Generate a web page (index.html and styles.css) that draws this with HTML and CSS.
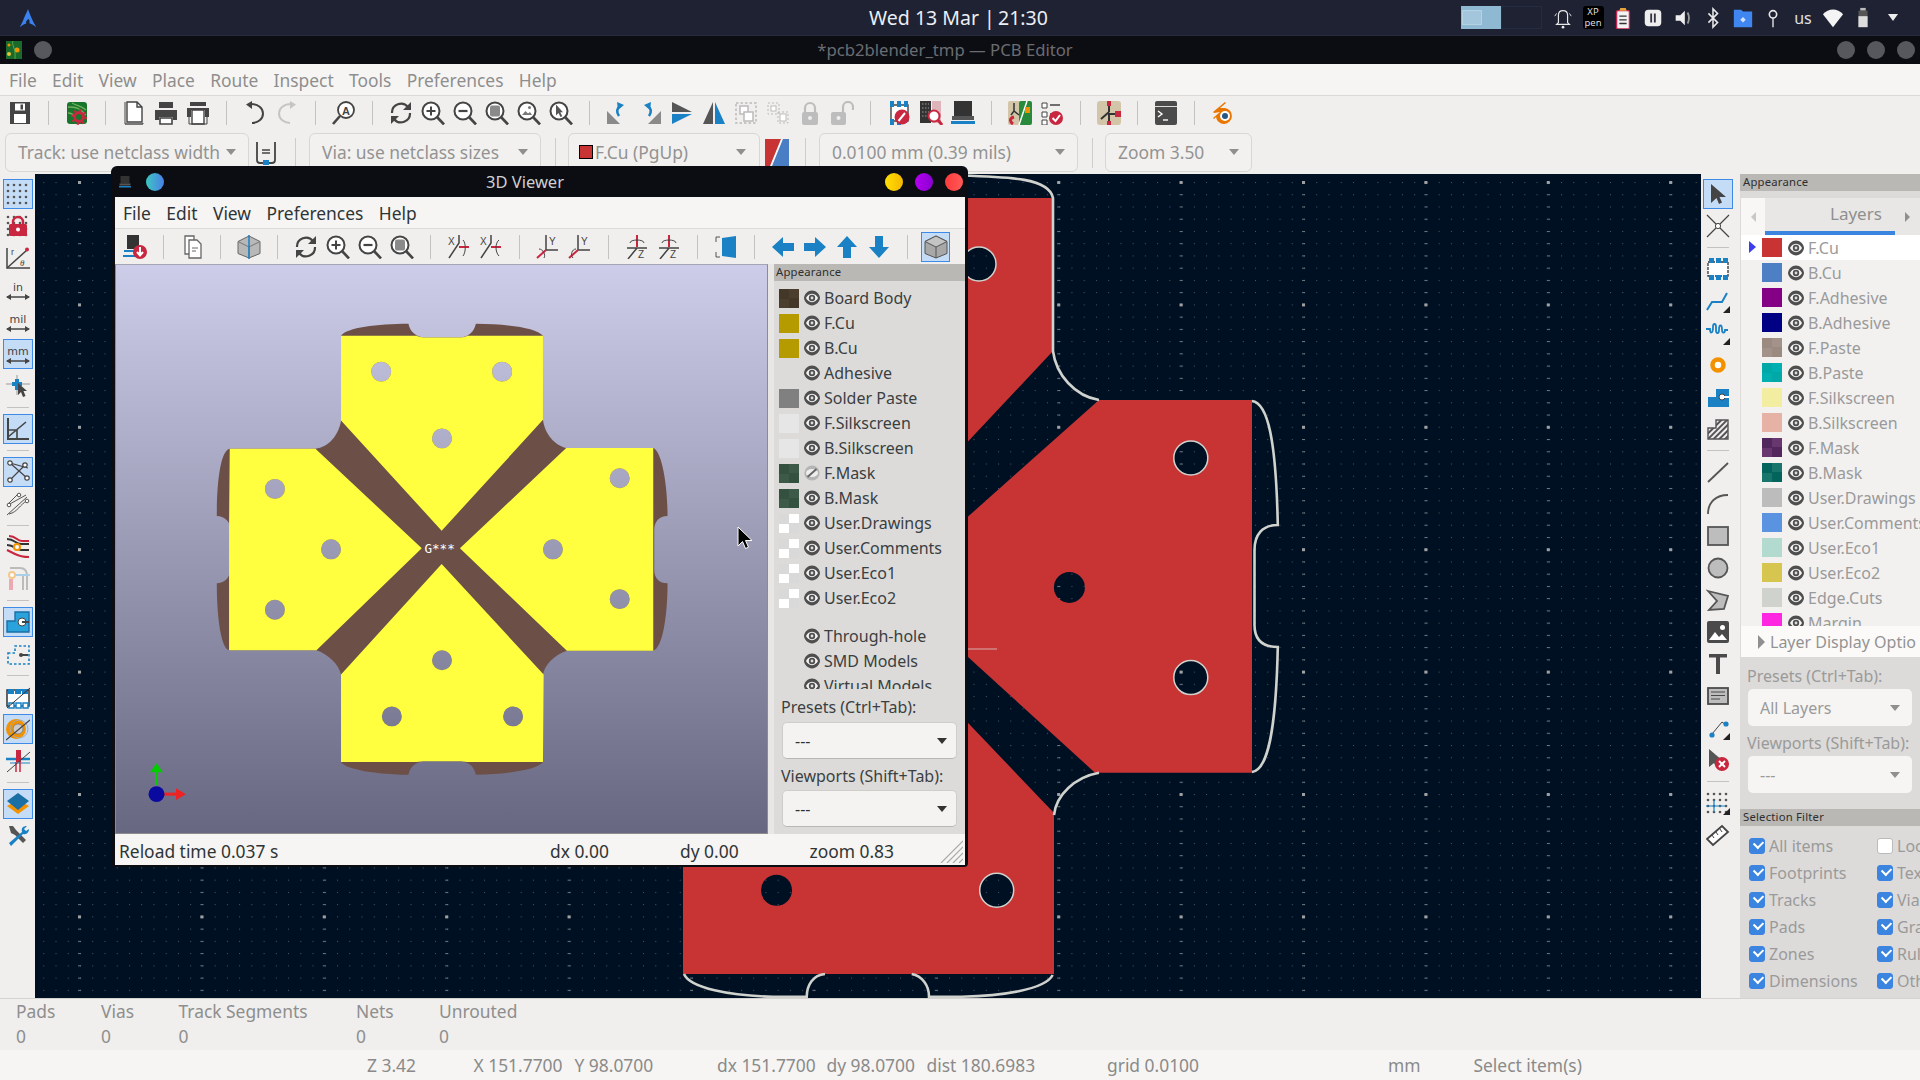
FILE: index.html
```html
<!DOCTYPE html>
<html lang="en">
<head>
<meta charset="utf-8">
<title>PCB Editor</title>
<link rel="stylesheet" href="styles.css">
</head>
<body>
<svg class="defs" aria-hidden="true">
  <symbol id="eye" viewBox="0 0 16 16"><path fill="#4e4e4e" d="M8 .6C12 .6 15.6 4 16 8c-.4 4-4 7.4-8 7.4S.4 12 0 8C.4 4 4 .6 8 .6z"/><path fill="#f4f4f4" d="M8 3.800c3 0 5 2.200 6 4.200-1 2-3 4.200-6 4.200S3 10 2 8c1-2 3-4.200 6-4.200z"/><circle cx="8" cy="8" r="3.200" fill="#4e4e4e"/><circle cx="8" cy="8" r="1.400" fill="#ddd"/></symbol>
  <symbol id="eyeoff" viewBox="0 0 16 16"><circle cx="8" cy="8" r="7.600" fill="#b5b5b5"/><ellipse cx="8" cy="8" rx="6" ry="4" fill="#eee"/><path d="M3.500 12 12.500 4" stroke="#666" stroke-width="2"/></symbol>
  <symbol id="save" viewBox="0 0 24 24"><path fill="#454545" d="M2 1h20v22H2z"/><path fill="#fff" d="M7 2.500h10v7H7zM6 13h12v9H6z"/><path fill="#454545" d="M12.500 3.500H15v5h-2.500z"/></symbol>
  <symbol id="bsetup" viewBox="0 0 24 24"><rect x="2" y="1" width="20" height="22" rx="3" fill="#17752e"/><path d="M3 6c8 0 12 1 18 8M7 2c5 3 10 3 14 7M3 12c3 0 5 1 6 4" fill="none" stroke="#6fb05a" stroke-width="1.400"/><circle cx="14" cy="16" r="4.500" fill="none" stroke="#c8273f" stroke-width="3"/><circle cx="14" cy="16" r="7" fill="none" stroke="#c8273f" stroke-width="2" stroke-dasharray="2.200 3.300"/></symbol>
  <symbol id="page" viewBox="0 0 24 24"><path d="M5 1h10l5 5v15H5zM15 1v5h5" fill="#fff" stroke="#444" stroke-width="1.400"/><path d="M3 23h18" stroke="#444" stroke-width="1.400"/><path d="M3 1v22M21 22v1" stroke="#444" stroke-width="1"/></symbol>
  <symbol id="print" viewBox="0 0 24 24"><path fill="#444" d="M5 1h14v6H5zM1 9h22v10h-4v-3H5v3H1z"/><path d="M6 17h12v6H6z" fill="#fff" stroke="#444" stroke-width="1.600"/></symbol>
  <symbol id="plot" viewBox="0 0 24 24"><path fill="#444" d="M4 1h16v4H4zM1 7h22v9h-4V9H5v7H1z"/><path d="M6 9h12v14H6z" fill="#fff" stroke="#444" stroke-width="1.400"/><path d="M3 23h18M3 9v14M21 9v14" stroke="#444"/></symbol>
  <symbol id="undo" viewBox="0 0 24 24"><path d="M8 3C15 3 20 7 20 12.500S15 22 9 22" fill="none" stroke="#444" stroke-width="2"/><path d="M9 0v8L3 3.500z" fill="#444"/></symbol>
  <symbol id="redo" viewBox="0 0 24 24"><path d="M16 3C9 3 4 7 4 12.500S9 22 15 22" fill="none" stroke="#c5c5c5" stroke-width="2"/><path d="M15 0v8l6-4.500z" fill="#c5c5c5"/></symbol>
  <symbol id="search" viewBox="0 0 24 24"><circle cx="14" cy="9" r="8" fill="#fff" stroke="#444" stroke-width="1.800"/><path d="M8 15 1 23" stroke="#444" stroke-width="2.600"/></symbol>
  <symbol id="refresh" viewBox="0 0 24 24"><path d="M3 12A9 9 0 0 1 19 6M21 12A9 9 0 0 1 5 18" fill="none" stroke="#444" stroke-width="2.200"/><path d="M22 1v8h-8zM2 23v-8h8z" fill="#444"/></symbol>
  <g id="mag"><circle cx="10" cy="10" r="8.500" fill="#fff" stroke="#444" stroke-width="2"/><path d="M16 16l7 7.500" stroke="#444" stroke-width="2.600"/></g>
  <symbol id="zin" viewBox="0 0 24 24"><use href="#mag"/><path d="M5.500 10h9M10 5.500v9" stroke="#444" stroke-width="2"/></symbol>
  <symbol id="zout" viewBox="0 0 24 24"><use href="#mag"/><path d="M5.500 10h9" stroke="#444" stroke-width="2.200"/></symbol>
  <symbol id="zfit" viewBox="0 0 24 24"><use href="#mag"/><rect x="5" y="4.500" width="10" height="11" rx="2" fill="#8a8a8a"/></symbol>
  <symbol id="zobj" viewBox="0 0 24 24"><use href="#mag"/><path d="M5 14l3.500-4 2.500 2.500 2-1.500 2 3z" fill="#777"/><circle cx="12.500" cy="6.500" r="1.500" fill="#777"/></symbol>
  <symbol id="zsel" viewBox="0 0 24 24"><use href="#mag"/><path d="M7 3.500v11l2.500-2.500 2 4 1.800-.8-2-4H14z" fill="#555"/></symbol>
  <symbol id="rccw" viewBox="0 0 24 24"><path d="M1 23V10l13 13z" fill="#8a8a8a"/><path d="M13 15C10 11 11 7 14 5" fill="none" stroke="#1a81c4" stroke-width="2.600"/><path d="M11 1l7 3-6 5z" fill="#1a81c4"/></symbol>
  <symbol id="rcw" viewBox="0 0 24 24"><path d="M23 23V10L10 23z" fill="#8a8a8a"/><path d="M11 15c3-4 2-8-1-10" fill="none" stroke="#1a81c4" stroke-width="2.600"/><path d="M13 1L6 4l6 5z" fill="#1a81c4"/></symbol>
  <symbol id="flipv" viewBox="0 0 24 24"><path d="M2 1l20 10H2z" fill="#555"/><path d="M2 23l20-10H2z" fill="#1a81c4"/></symbol>
  <symbol id="fliph" viewBox="0 0 24 24"><path d="M11 1v22H1z" fill="#555"/><path d="M13 1v22h10z" fill="#1a81c4"/></symbol>
  <symbol id="group" viewBox="0 0 24 24"><rect x="2" y="2" width="20" height="20" fill="none" stroke="#bbb" stroke-width="1.500" stroke-dasharray="2.500 2"/><rect x="6" y="5" width="8" height="8" fill="#fff" stroke="#bbb" stroke-width="1.500"/><rect x="10" y="11" width="9" height="9" fill="#fff" stroke="#bbb" stroke-width="1.500"/></symbol>
  <symbol id="ungroup" viewBox="0 0 24 24"><rect x="2" y="2" width="11" height="11" fill="none" stroke="#bbb" stroke-dasharray="2 2"/><rect x="5" y="5" width="5" height="5" fill="#fff" stroke="#bbb"/><rect x="12" y="11" width="10" height="11" fill="none" stroke="#bbb" stroke-dasharray="2 2"/><rect x="14" y="13" width="6" height="7" fill="#fff" stroke="#bbb"/></symbol>
  <symbol id="lock" viewBox="0 0 24 24"><path d="M7 12V7a5 5 0 0 1 10 0v5" fill="none" stroke="#bdbdbd" stroke-width="2.200"/><rect x="4" y="11" width="16" height="13" rx="2" fill="#bdbdbd"/><circle cx="12" cy="17" r="2" fill="#eee"/></symbol>
  <symbol id="unlock" viewBox="0 0 24 24"><path d="M13 12V6a5 5 0 0 1 10 0v3" fill="none" stroke="#bdbdbd" stroke-width="2.200"/><rect x="1" y="11" width="15" height="13" rx="2" fill="#bdbdbd"/><circle cx="8.500" cy="17" r="2" fill="#eee"/></symbol>
  <symbol id="drc" viewBox="0 0 24 24"><path d="M4 4h17v16H4z" fill="#fff" stroke="#444" stroke-width="1.400"/><path d="M3 0h4v6H3zM10 0h4v6h-4zM17 0h4v6h-4zM3 18h4v6H3zM10 18h4v6h-4z" fill="#1a81c4"/><circle cx="15" cy="16" r="7.500" fill="#c8273f"/><path d="M11.500 20 18 12" stroke="#fff" stroke-width="2"/></symbol>
  <symbol id="netinsp" viewBox="0 0 24 24"><path d="M1 0h11v22H1z" fill="#333"/><path d="M3 3h7M3 7h7M3 11h7M3 15h7" stroke="#999" stroke-dasharray="1.500 1.500"/><path d="M13 0h9v22h-9z" fill="#ddb4b9"/><circle cx="15" cy="15" r="5.500" fill="#fff" stroke="#c8273f" stroke-width="2"/><path d="M19 19l4 5" stroke="#c8273f" stroke-width="3"/></symbol>
  <symbol id="view3d" viewBox="0 0 24 24"><rect x="3" y="0" width="18" height="15" fill="#333"/><rect x="1" y="15" width="22" height="4" fill="#555"/><rect x="0" y="20" width="24" height="3" fill="#1a81c4"/></symbol>
  <symbol id="sync" viewBox="0 0 24 24"><rect x="0" y="0" width="13" height="24" rx="2" fill="#d3c6a8"/><rect x="11" y="0" width="13" height="24" rx="2" fill="#2a8a3c"/><path d="M6 2v8l-3 4M6 10l5 4" stroke="#333" stroke-width="1.500" fill="none"/><path d="M11 24 19 0" stroke="#fff" stroke-width="1.500"/><rect x="17" y="6" width="5" height="6" fill="#f39200"/><path d="M5 23c-4-3-3-6 1-7" fill="none" stroke="#c8273f" stroke-width="3"/></symbol>
  <symbol id="check" viewBox="0 0 24 24"><path d="M2 2h5v5H2zM2 11h5v5H2zM2 19h5v5H2z" fill="#fff" stroke="#444"/><path d="M10 4h10M10 13h3" stroke="#444" stroke-width="1.400"/><circle cx="16" cy="17" r="7" fill="#c8273f"/><path d="M12.500 17l3 3 4.500-6" fill="none" stroke="#fff" stroke-width="2"/></symbol>
  <symbol id="sch" viewBox="0 0 24 24"><rect width="24" height="24" rx="3" fill="#d3c6a8"/><path d="M12 3v8M20 13H12v6M12 11 4 18M12 19v3" stroke="#333" stroke-width="2" fill="none"/><path d="M10 0h4v5h-4zM18 10h6v6h-6zM10 20h4v4h-4z" fill="#c8273f"/></symbol>
  <symbol id="term" viewBox="0 0 24 24"><rect x="1" y="0" width="22" height="24" rx="2" fill="#4b4b4b"/><path d="M1 5.500h22" stroke="#ddd"/><path d="M4 10l4 3-4 3" fill="none" stroke="#fff" stroke-width="1.400"/><path d="M9 19h5" stroke="#fff" stroke-width="1.400"/></symbol>
  <symbol id="blender" viewBox="0 0 24 24"><path d="M5 16A8 8 0 1 0 14 7L9 7l6-5-1-1L2 11l1 1 6-1-7 6 1 1z" fill="#ea7600"/><circle cx="14" cy="15" r="5" fill="#fff"/><circle cx="14" cy="15" r="3" fill="#265787"/></symbol>

  <symbol id="grid" viewBox="0 0 24 24"><g fill="#555"><circle cx="2" cy="3" r="1.300"/><circle cx="8" cy="3" r="1.300"/><circle cx="14" cy="3" r="1.300"/><circle cx="20" cy="3" r="1.300"/><circle cx="2" cy="9" r="1.300"/><circle cx="8" cy="9" r="1.300"/><circle cx="14" cy="9" r="1.300"/><circle cx="20" cy="9" r="1.300"/><circle cx="2" cy="15" r="1.300"/><circle cx="8" cy="15" r="1.300"/><circle cx="14" cy="15" r="1.300"/><circle cx="20" cy="15" r="1.300"/><circle cx="2" cy="21" r="1.300"/><circle cx="8" cy="21" r="1.300"/><circle cx="14" cy="21" r="1.300"/><circle cx="20" cy="21" r="1.300"/></g></symbol>
  <symbol id="gridlock" viewBox="0 0 24 24"><use href="#grid"/><path d="M7 11V8a5 5 0 0 1 10 0v3" fill="none" stroke="#c8273f" stroke-width="2.400"/><rect x="3" y="10" width="18" height="12" rx="1.500" fill="#c8273f"/><circle cx="12" cy="15.500" r="2" fill="#fff"/></symbol>
  <symbol id="polar" viewBox="0 0 24 24"><path d="M1 2v20h23" fill="none" stroke="#444" stroke-width="1.500"/><path d="M1 22 21 4" stroke="#444" stroke-width="1.500"/><circle cx="21" cy="3.500" r="2" fill="#c8273f"/></symbol>
  <symbol id="dimarrow" viewBox="0 0 24 24"><path d="M1 19h22" stroke="#444" stroke-width="1.500"/><path d="M0 19l5-3v6zM24 19l-5-3v6z" fill="#444"/></symbol>
  <symbol id="ccursor" viewBox="0 0 24 24"><path d="M0 10h24M11 1v20" stroke="#999"/><path d="M6 8h10v4H6zM9 5h4v11H9z" fill="#1a81c4"/><path d="M12 9v12l3-3 2 5 2.500-1-2-5H21z" fill="#444"/></symbol>
  <symbol id="axes" viewBox="0 0 24 24"><path d="M2 1v21h21" fill="none" stroke="#444" stroke-width="2"/><path d="M2 20 20 5M2 13h9v9" fill="none" stroke="#444" stroke-width="1.600"/></symbol>
  <symbol id="rats" viewBox="0 0 24 24"><path d="M4 3 21 18M4 20 19 5M4 3l18 5" stroke="#444" stroke-width="1.200"/><g fill="#fff" stroke="#444" stroke-width="1.200"><circle cx="4" cy="3" r="2.200"/><circle cx="19" cy="5" r="2.200"/><circle cx="4" cy="20" r="2.200"/><circle cx="21" cy="18" r="2.200"/></g></symbol>
  <symbol id="curved" viewBox="0 0 24 24"><path d="M2 12 11 3M3 22C12 20 14 12 21 9M2 13l18-10M1 23 21 5" fill="none" stroke="#555" stroke-width="1"/><g fill="#fff" stroke="#555"><circle cx="3" cy="13" r="1.800"/><circle cx="13" cy="3" r="1.800"/><circle cx="21" cy="9" r="1.800"/></g></symbol>
  <symbol id="hc" viewBox="0 0 24 24"><path d="M1 4c8 0 8 5 14 5h8M1 10c8 0 8 5 14 5h8" fill="none" stroke="#333" stroke-width="2"/><path d="M3 1c8 0 7 5 13 5h7" fill="none" stroke="#c8273f" stroke-width="2"/><path d="M1 15l8 4c4 2 7 3 14 3" fill="none" stroke="#c8273f" stroke-width="2"/><circle cx="11" cy="12" r="3" fill="#fff" stroke="#f39200" stroke-width="2"/></symbol>
  <symbol id="hc2" viewBox="0 0 24 24"><path d="M17 23V8M21 23V8M4 1h10c6 0 7 5 7 8" fill="none" stroke="#bbb" stroke-width="2"/><path d="M4 8h20" stroke="#a9cfe9" stroke-width="2"/><path d="M3 12h4v11H3z" fill="#eba9b2"/><circle cx="6" cy="8" r="3" fill="#fff" stroke="#f5c78a" stroke-width="2"/></symbol>
  <symbol id="fillz" viewBox="0 0 24 24"><path d="M1 11h8V2h14v20H1z" fill="#2aa3dd" stroke="#1a6fa5" stroke-width="1.400"/><circle cx="16" cy="12" r="4" fill="#fff" stroke="#444"/><path d="M16 12h7" stroke="#444" stroke-width="2"/></symbol>
  <symbol id="outl" viewBox="0 0 24 24"><path d="M2 11h7V4h14v18H2z" fill="none" stroke="#1a81c4" stroke-width="1.600" stroke-dasharray="2.500 2"/><path d="M14 13h8" stroke="#444" stroke-width="2"/><circle cx="15" cy="13" r="2" fill="#444"/></symbol>
  <symbol id="fp" viewBox="0 0 24 24"><path d="M1 5h22v16H1z" fill="#fff" stroke="#333" stroke-width="1.500"/><path d="M2 4h6v5H2zM9 4h6v5H9zM16 4h6v5h-6z" fill="#1a81c4"/><path d="M3 18h5v5H3zM10 18h5v5h-5zM17 18h5v5h-5z" fill="#fff" stroke="#1a81c4" stroke-width="1.500"/><path d="M1 23 24 3" stroke="#333"/></symbol>
  <symbol id="padz" viewBox="0 0 24 24"><circle cx="10" cy="12" r="10" fill="#f39200"/><circle cx="12" cy="12" r="5" fill="#ccc" stroke="#888"/><circle cx="13" cy="12" r="9" fill="none" stroke="#aaa"/><path d="M0 23 24 3" stroke="#444" stroke-width="1.200"/></symbol>
  <symbol id="viaz" viewBox="0 0 24 24"><path d="M0 10h24" stroke="#1a81c4" stroke-width="2.500"/><path d="M4 14h20" stroke="#1a81c4"/><path d="M10 1h5v12h-5z" fill="#c8273f"/><path d="M10 13v10M14 13v10" stroke="#c8273f" stroke-width="1.500"/><path d="M1 23 24 3" stroke="#444"/></symbol>
  <symbol id="layers" viewBox="0 0 24 24"><path d="M1 14 12 8l11 6-11 8z" fill="#f39200"/><path d="M1 9 12 1l11 8-11 9z" fill="#1a6fa5"/></symbol>
  <symbol id="tools" viewBox="0 0 24 24"><path d="M3 2l4 0 3 4 3 3 7 7-3 3-8-8-4-2z" fill="#555"/><path d="M21 2c-4 0-6 2-5 6L3 19l2 3L17 10c4 1 6-2 6-5l-3 2-2-2z" fill="#1a81c4"/></symbol>

  <symbol id="sel" viewBox="0 0 24 24"><path d="M5 2v19l5.500-5 2.500 6 3-1.500-2.500-5.500H20z" fill="#444"/></symbol>
  <symbol id="xcross" viewBox="0 0 24 24"><path d="M1 1l22 22M23 1 1 23" stroke="#444" stroke-width="1.200"/><circle cx="12" cy="12" r="2.600" fill="#fff" stroke="#444"/></symbol>
  <symbol id="fpadd" viewBox="0 0 24 24"><path d="M2 5h20v14H2z" fill="#fff" stroke="#333" stroke-width="1.300" stroke-dasharray="3 1"/><path d="M3 1h5v5H3zM10 1h5v5h-5zM17 1h5v5h-5zM3 18h5v5H3zM10 18h5v5h-5zM17 18h5v5h-5z" fill="#1a81c4"/></symbol>
  <g id="corner"><path d="M24 17v7h-7z" fill="#222"/></g>
  <symbol id="route" viewBox="0 0 24 24"><path d="M1 21l5-8h10l5-9" fill="none" stroke="#1a81c4" stroke-width="2"/><use href="#corner"/></symbol>
  <symbol id="diff" viewBox="0 0 24 24"><path d="M0 8h4c0 5 3 5 3-2 0-4 3-4 3 0v3c0 4 3 4 3 0 0-6 3-6 3 0 0 4 3 3 3 0h3" fill="none" stroke="#1a81c4" stroke-width="1.800"/><use href="#corner"/></symbol>
  <symbol id="viaadd" viewBox="0 0 24 24"><circle cx="12" cy="12" r="5.500" fill="#fff" stroke="#f39200" stroke-width="4.500"/></symbol>
  <symbol id="fp2" viewBox="0 0 24 24"><path d="M2 12h8V4h13v18H2z" fill="#1a81c4"/><circle cx="16" cy="12" r="3" fill="#fff" stroke="#444"/><path d="M16 12h7" stroke="#fff" stroke-width="2"/></symbol>
  <symbol id="zone" viewBox="0 0 24 24"><defs><pattern id="hatch" width="4" height="4" patternUnits="userSpaceOnUse" patternTransform="rotate(45)"><rect width="2" height="4" fill="#555"/></pattern></defs><path d="M2 11h8V3h12v19H2z" fill="url(#hatch)" stroke="#555" stroke-width="1.400"/></symbol>
  <symbol id="line" viewBox="0 0 24 24"><path d="M2 22 22 3" stroke="#555" stroke-width="1.800"/></symbol>
  <symbol id="arc" viewBox="0 0 24 24"><path d="M2 22C2 10 10 3 22 3" fill="none" stroke="#555" stroke-width="1.800"/></symbol>
  <symbol id="rect" viewBox="0 0 24 24"><rect x="2" y="3" width="20" height="18" fill="#bdbdbd" stroke="#555" stroke-width="1.800"/></symbol>
  <symbol id="circ" viewBox="0 0 24 24"><circle cx="12" cy="12" r="9.500" fill="#bdbdbd" stroke="#555" stroke-width="1.800"/></symbol>
  <symbol id="poly" viewBox="0 0 24 24"><path d="M2 3l20 5-4 13-15 1 8-9z" fill="#bdbdbd" stroke="#555" stroke-width="1.800"/></symbol>
  <symbol id="image" viewBox="0 0 24 24"><rect x="1" y="1" width="22" height="22" rx="2" fill="#4a4a4a"/><path d="M3 20l6-8 4 5 3-3 5 6z" fill="#fff"/><circle cx="16.500" cy="7.500" r="2.500" fill="#fff"/></symbol>
  <symbol id="ttool" viewBox="0 0 24 24"><path d="M3 2h18v3.500h-7V22h-4V5.500H3z" fill="#4a4a4a"/></symbol>
  <symbol id="tbox" viewBox="0 0 24 24"><rect x="2" y="4" width="20" height="16" fill="#bdbdbd" stroke="#4a4a4a" stroke-width="1.800"/><path d="M5 8h14M5 11.500h14M5 15h9" stroke="#4a4a4a" stroke-width="1.200"/></symbol>
  <symbol id="dim" viewBox="0 0 24 24"><path d="M6 18 16 6l4 3" fill="none" stroke="#444"/><circle cx="6" cy="19" r="2.600" fill="#1a81c4"/><circle cx="20" cy="8" r="2.600" fill="#1a81c4"/><use href="#corner"/></symbol>
  <symbol id="del" viewBox="0 0 24 24"><path d="M3 1v18l5-4 2 4 4-3-2-3h5z" fill="#555"/><circle cx="16" cy="16" r="7" fill="#c8273f"/><path d="M13 13l6 6M19 13l-6 6" stroke="#fff" stroke-width="2"/></symbol>
  <symbol id="gorigin" viewBox="0 0 24 24"><use href="#grid"/><path d="M0 15h20M8 9v12" stroke="#1a81c4" stroke-width="1.200"/><use href="#corner"/></symbol>
  <symbol id="ruler" viewBox="0 0 24 24"><path d="M1 16 16 3l6 6L7 22z" fill="#fff" stroke="#444" stroke-width="1.800"/><path d="M6 12l2 3M10 9l2 3M14 6l2 3" stroke="#444"/></symbol>

  <symbol id="dsave" viewBox="0 0 24 24"><rect x="4" y="0" width="12" height="14" fill="#333"/><path d="M1 16h12M0 21h14" stroke="#1a81c4" stroke-width="2"/><circle cx="17" cy="17" r="7" fill="#c8273f"/><path d="M17 12v8M14 17l3 3.500 3-3.500" fill="none" stroke="#fff" stroke-width="2"/></symbol>
  <symbol id="copy" viewBox="0 0 24 24"><path d="M5 1h9l0 18H5z" fill="#fff" stroke="#666" stroke-width="1.300"/><path d="M9 5h8l4 4v14H9z" fill="#fff" stroke="#666" stroke-width="1.300"/><path d="M12 13h6M12 16h4" stroke="#666"/></symbol>
  <symbol id="cube" viewBox="0 0 24 24"><path d="M12 1 23 6.500v12L12 23 1 18.500v-12z" fill="#b8b8b8" stroke="#666"/><path d="M1 6.500 12 12l11-5.500M12 12v11" stroke="#777" fill="none"/><path d="M12 0v24" stroke="#1a81c4" stroke-width="1.500"/></symbol>
  <symbol id="cubeg" viewBox="0 0 24 24"><path d="M12 1 23 6.500v12L12 23 1 18.500v-12z" fill="#a8a8a8" stroke="#555"/><path d="M1 6.500 12 12l11-5.500L12 1z" fill="#c4c4c4" stroke="#555"/><path d="M12 12v11" stroke="#555"/></symbol>
  <symbol id="rx1" viewBox="0 0 24 24"><path d="M2 23 12 8V0" fill="none" stroke="#444" stroke-width="1.500"/><path d="M12 12h10" stroke="#c8273f" stroke-width="2"/><path d="M16 5c3 3 3 12 0 16" fill="none" stroke="#444"/></symbol>
  <symbol id="rx2" viewBox="0 0 24 24"><path d="M2 23 12 8V0" fill="none" stroke="#444" stroke-width="1.500"/><path d="M12 12h10" stroke="#c8273f" stroke-width="2"/><path d="M20 5c-4 3-4 12 0 16" fill="none" stroke="#444"/></symbol>
  <symbol id="ry1" viewBox="0 0 24 24"><path d="M10 0v15h12" fill="none" stroke="#444" stroke-width="1.500"/><path d="M1 23 10 15" stroke="#c8273f" stroke-width="2"/><path d="M3 14c4 0 7 6 5 9" fill="none" stroke="#444"/></symbol>
  <symbol id="ry2" viewBox="0 0 24 24"><path d="M10 0v15h12" fill="none" stroke="#444" stroke-width="1.500"/><path d="M1 23 10 15" stroke="#c8273f" stroke-width="2"/><path d="M8 14c-4 0-6 6-3 9" fill="none" stroke="#444"/></symbol>
  <symbol id="rz1" viewBox="0 0 24 24"><path d="M12 0v12" stroke="#c8273f" stroke-width="2"/><path d="M2 13h20M12 13 3 24" stroke="#444" stroke-width="1.500"/><path d="M5 8c0-4 14-4 14 0" fill="none" stroke="#444"/></symbol>
  <symbol id="flip3" viewBox="0 0 24 24"><path d="M2 2h4M2 22h4M2 2v5M2 17v5" stroke="#555" fill="none"/><path d="M8 3l14-2v22L8 21z" fill="#1a81c4"/></symbol>
  <symbol id="aleft" viewBox="0 0 24 24"><path d="M1 12 12 2v6h11v8H12v6z" fill="#1a81c4"/></symbol>
  <symbol id="aright" viewBox="0 0 24 24"><path d="M23 12 12 2v6H1v8h11v6z" fill="#1a81c4"/></symbol>
  <symbol id="aup" viewBox="0 0 24 24"><path d="M12 1 22 12h-6v11H8V12H2z" fill="#1a81c4"/></symbol>
  <symbol id="adown" viewBox="0 0 24 24"><path d="M12 23 22 12h-6V1H8v11H2z" fill="#1a81c4"/></symbol>

  <symbol id="bell" viewBox="0 0 24 24"><path d="M7 17V9c0-3 2-5 5-5s5 2 5 5v8l2 2H5z" fill="none" stroke="#e8e8e8" stroke-width="1.300"/><circle cx="12" cy="22" r="1.500" fill="#e8e8e8"/><path d="M5 7 3 10M19 7l2 3" stroke="#e8e8e8"/></symbol>
  <symbol id="bookmark" viewBox="0 0 24 24"><rect x="5" y="4" width="14" height="20" rx="1.500" fill="#f3f3f3" stroke="#c22550" stroke-width="1.500"/><path d="M9 1h6l1 3H8z" fill="#e8a23a"/><path d="M8 10h8M8 14h8M8 18h8" stroke="#333" stroke-width="1.500"/></symbol>
  <symbol id="pausei" viewBox="0 0 24 24"><rect x="3" y="3" width="18" height="18" rx="4" fill="#eee"/><path d="M9 7h2v10H9zM13 7h2v10h-2z" fill="#334"/></symbol>
  <symbol id="vol" viewBox="0 0 24 24"><path d="M4 9h5l5-5v16l-5-5H4z" fill="#eee"/><path d="M17 6c2 4 2 8 0 12" fill="none" stroke="#999" stroke-width="2"/></symbol>
  <symbol id="bt" viewBox="0 0 24 24"><path d="M7 7l10 10-5 5V2l5 5L7 17" fill="none" stroke="#e8e8e8" stroke-width="1.700"/></symbol>
  <symbol id="folder" viewBox="0 0 24 24"><path d="M2 3h8l2 2h10v17H2z" fill="#3f86f0"/><path d="M12 11l3 3-3 3-3-3z" fill="#cfe2ff"/></symbol>
  <symbol id="pin" viewBox="0 0 24 24"><circle cx="12" cy="8" r="4" fill="none" stroke="#e8e8e8" stroke-width="1.800"/><path d="M12 12v10" stroke="#e8e8e8" stroke-width="1.500"/></symbol>
  <symbol id="wifi" viewBox="0 0 24 24"><path d="M1 8C7 1 17 1 23 8L12 22z" fill="#f4f4f4"/></symbol>
  <symbol id="batt" viewBox="0 0 24 24"><rect x="9" y="1" width="6" height="3" fill="#bbb"/><rect x="7" y="4" width="10" height="18" fill="#555"/><rect x="7" y="10" width="10" height="12" fill="#ddd"/></symbol>
  <symbol id="arch" viewBox="0 0 24 24"><path d="M12 0c-1 3-2 5-4 9-2 5-4 10-7 15 3-2 6-4 9-5-1-1-1-1 0-3 2-3 4-3 4 0 0 2 0 2 0 3 3 1 6 3 9 5C19 18 14 6 12 0z" fill="#3b82f0"/></symbol>
  <symbol id="kicad" viewBox="0 0 16 18"><rect width="16" height="18" fill="#1a6a2c"/><circle cx="11" cy="9" r="2.500" fill="#f39200"/><circle cx="3" cy="4" r="1.500" fill="#f39200"/><circle cx="3" cy="13" r="2" fill="#e8c53a"/><path d="M7 0c-2 4 3 6 2 18" stroke="#5aa94a" fill="none"/></symbol>
</svg>

<header class="topbar">
  <div class="top-left"><svg class="archlogo"><use href="#arch"/></svg></div>
  <div class="clock">Wed 13 Mar |&#8201;21:30</div>
  <div class="tray-row">
    <div class="pager"><span class="pager-on"><span class="pager-win"></span></span><span class="pager-off"></span></div>
    <span class="tray"><svg class="tray-ic"><use href="#bell"/></svg></span>
    <span class="tray"><span class="xp">XP<br>pen</span></span>
    <span class="tray"><svg class="tray-ic"><use href="#bookmark"/></svg></span>
    <span class="tray"><svg class="tray-ic"><use href="#pausei"/></svg></span>
    <span class="tray"><svg class="tray-ic"><use href="#vol"/></svg></span>
    <span class="tray"><svg class="tray-ic"><use href="#bt"/></svg></span>
    <span class="tray"><svg class="tray-ic"><use href="#folder"/></svg></span>
    <span class="tray"><svg class="tray-ic"><use href="#pin"/></svg></span>
    <span class="tray tray-text">us</span>
    <span class="tray"><svg class="tray-ic"><use href="#wifi"/></svg></span>
    <span class="tray"><svg class="tray-ic"><use href="#batt"/></svg></span>
    <span class="tray"><span class="tray-caret"></span></span>
  </div>
</header>

<div class="titlebar">
  <div class="tb-left"><svg class="kicad"><use href="#kicad"/></svg><span class="dot dot-gray dot-first"></span></div>
  <div class="title">*pcb2blender_tmp — PCB Editor</div>
  <div class="tb-right"><span class="dot dot-gray"></span><span class="dot dot-gray"></span><span class="dot dot-gray"></span></div>
</div>

<nav class="menubar">
  <span>File</span><span>Edit</span><span>View</span><span>Place</span><span>Route</span><span>Inspect</span><span>Tools</span><span>Preferences</span><span>Help</span>
</nav>

<div class="maintb">
  <span class="tool"><svg class="ic"><use href="#save"/></svg></span><i class="sep"></i>
  <span class="tool"><svg class="ic"><use href="#bsetup"/></svg></span><i class="sep"></i>
  <span class="tool"><svg class="ic"><use href="#page"/></svg></span>
  <span class="tool"><svg class="ic"><use href="#print"/></svg></span>
  <span class="tool"><svg class="ic"><use href="#plot"/></svg></span><i class="sep"></i>
  <span class="tool"><svg class="ic"><use href="#undo"/></svg></span>
  <span class="tool"><svg class="ic"><use href="#redo"/></svg></span><i class="sep"></i>
  <span class="tool"><svg class="ic" viewBox="0 0 24 24"><use href="#search"/><text class="it it-a" x="14" y="13.500">A</text></svg></span><i class="sep"></i>
  <span class="tool"><svg class="ic"><use href="#refresh"/></svg></span>
  <span class="tool"><svg class="ic"><use href="#zin"/></svg></span>
  <span class="tool"><svg class="ic"><use href="#zout"/></svg></span>
  <span class="tool"><svg class="ic"><use href="#zfit"/></svg></span>
  <span class="tool"><svg class="ic"><use href="#zobj"/></svg></span>
  <span class="tool"><svg class="ic"><use href="#zsel"/></svg></span><i class="sep"></i>
  <span class="tool"><svg class="ic"><use href="#rccw"/></svg></span>
  <span class="tool"><svg class="ic"><use href="#rcw"/></svg></span>
  <span class="tool"><svg class="ic"><use href="#flipv"/></svg></span>
  <span class="tool"><svg class="ic"><use href="#fliph"/></svg></span>
  <span class="tool"><svg class="ic"><use href="#group"/></svg></span>
  <span class="tool"><svg class="ic"><use href="#ungroup"/></svg></span>
  <span class="tool"><svg class="ic"><use href="#lock"/></svg></span>
  <span class="tool"><svg class="ic"><use href="#unlock"/></svg></span><i class="sep"></i>
  <span class="tool"><svg class="ic"><use href="#drc"/></svg></span>
  <span class="tool"><svg class="ic"><use href="#netinsp"/></svg></span>
  <span class="tool"><svg class="ic"><use href="#view3d"/></svg></span><i class="sep"></i>
  <span class="tool"><svg class="ic"><use href="#sync"/></svg></span>
  <span class="tool"><svg class="ic"><use href="#check"/></svg></span><i class="sep"></i>
  <span class="tool"><svg class="ic"><use href="#sch"/></svg></span><i class="sep"></i>
  <span class="tool"><svg class="ic"><use href="#term"/></svg></span><i class="sep"></i>
  <span class="tool"><svg class="ic"><use href="#blender"/></svg></span>
</div>

<div class="subtb">
  <div class="combo combo-track"><span>Track: use netclass width</span><i class="caret"></i></div>
  <svg class="lock-ic" viewBox="0 0 24 24"><path d="M3 1v18a3 3 0 0 0 3 3h12a3 3 0 0 0 3-3V1" fill="none" stroke="#444" stroke-width="1.800"/><path d="M8 9h8M8 12h8" stroke="#444" stroke-width="1.400"/><path d="M9 19h6v5H9z" fill="#1a81c4"/></svg>
  <i class="subsep"></i>
  <div class="combo combo-via"><span>Via: use netclass sizes</span><i class="caret"></i></div>
  <i class="subsep"></i>
  <div class="combo combo-layer"><span class="layer-value"><i class="layer-chip"></i>F.Cu (PgUp)</span><i class="caret"></i></div>
  <svg class="pair-ic" viewBox="0 0 24 27"><path d="M0 0h16L5 27H0z" fill="#c83434"/><path d="M24 0v27H7L18 0z" fill="#4a7ec4"/><path d="M17 0 6 27" stroke="#fff" stroke-width="1"/></svg>
  <i class="subsep"></i>
  <div class="combo combo-grid"><span>0.0100 mm (0.39 mils)</span><i class="caret"></i></div>
  <i class="subsep"></i>
  <div class="combo combo-zoom"><span>Zoom 3.50</span><i class="caret"></i></div>
</div>

<main class="workspace">
  <aside class="vbar vbar-left">
    <span class="vtool on"><svg class="ic"><use href="#grid"/></svg></span>
    <span class="vtool"><svg class="ic"><use href="#gridlock"/></svg></span>
    <span class="vtool"><svg class="ic" viewBox="0 0 24 24"><use href="#polar"/><text class="it it-r" x="5" y="9">r</text><text class="it it-th" x="14" y="20">θ</text></svg></span>
    <span class="vtool"><svg class="ic" viewBox="0 0 24 24"><use href="#dimarrow"/><text class="it it-u" x="12" y="13">in</text></svg></span>
    <span class="vtool"><svg class="ic" viewBox="0 0 24 24"><use href="#dimarrow"/><text class="it it-u" x="12" y="13">mil</text></svg></span>
    <span class="vtool on"><svg class="ic" viewBox="0 0 24 24"><use href="#dimarrow"/><text class="it it-u" x="12" y="13">mm</text></svg></span>
    <span class="vtool"><svg class="ic"><use href="#ccursor"/></svg></span>
    <i class="vsep"></i>
    <span class="vtool on"><svg class="ic"><use href="#axes"/></svg></span>
    <i class="vsep"></i>
    <span class="vtool on"><svg class="ic"><use href="#rats"/></svg></span>
    <span class="vtool"><svg class="ic"><use href="#curved"/></svg></span>
    <i class="vsep"></i>
    <span class="vtool"><svg class="ic"><use href="#hc"/></svg></span>
    <span class="vtool"><svg class="ic"><use href="#hc2"/></svg></span>
    <i class="vsep"></i>
    <span class="vtool on"><svg class="ic"><use href="#fillz"/></svg></span>
    <span class="vtool"><svg class="ic"><use href="#outl"/></svg></span>
    <i class="vsep"></i>
    <span class="vtool"><svg class="ic"><use href="#fp"/></svg></span>
    <span class="vtool on"><svg class="ic"><use href="#padz"/></svg></span>
    <span class="vtool"><svg class="ic"><use href="#viaz"/></svg></span>
    <i class="vsep"></i>
    <span class="vtool on"><svg class="ic"><use href="#layers"/></svg></span>
    <span class="vtool"><svg class="ic"><use href="#tools"/></svg></span>
  </aside>

  <section class="canvas">
    <svg class="board" viewBox="35 174 1666 824">
      <defs>
        <pattern id="gminor" x="6.560" y="182" width="12.240" height="12.240" patternUnits="userSpaceOnUse"><rect width="1" height="1" fill="#4e5a66"/></pattern>
        <pattern id="gdash" x="78" y="182" width="122.400" height="12.240" patternUnits="userSpaceOnUse"><rect width="3" height="1" fill="#70787f"/></pattern>
        <pattern id="gmajor" x="78" y="181" width="122.400" height="122.400" patternUnits="userSpaceOnUse"><rect width="3" height="3" fill="#a0a0a0"/></pattern>
      </defs>
      <rect x="35" y="174" width="1666" height="824" fill="#001023"/>
      <rect x="35" y="174" width="1666" height="824" fill="url(#gminor)" shape-rendering="crispEdges"/>
      <rect x="35" y="174" width="1666" height="824" fill="url(#gdash)" shape-rendering="crispEdges"/>
      <rect x="35" y="174" width="1666" height="824" fill="url(#gmajor)" shape-rendering="crispEdges"/>
      <path class="copper" fill-rule="evenodd" d="M683 198H1053V351L868 548 683 351Z M962 264a17 17 0 1 0 34 0a17 17 0 1 0 -34 0Z
        M1099 400H1252V772.700H1095L890 586Z M1173.800 458a17 17 0 1 0 34 0a17 17 0 1 0 -34 0Z M1173.800 677.600a17 17 0 1 0 34 0a17 17 0 1 0 -34 0Z M1053.900 587.400a15.500 15.500 0 1 0 31 0a15.500 15.500 0 1 0 -31 0Z
        M868 618 1054 813V974H683V813Z M761 890.300a15.500 15.500 0 1 0 31 0a15.500 15.500 0 1 0 -31 0Z M979.700 890.300a17 17 0 1 0 34 0a17 17 0 1 0 -34 0Z"/>
      <g class="edge">
        <path d="M960 175.500C1010 177 1049 178 1053 198V351C1056 375 1075 396 1099 400"/>
        <path d="M1252 401C1268 403 1276 440 1277.800 525 1262 525 1254.500 535 1254.500 550V625C1254.500 640 1262 647 1277.800 647 1276 730 1268 770 1252 772"/>
        <path d="M1099 772.700C1075 777 1056 795 1054 815"/>
        <path d="M684 974C690 988 730 996 773 996.700H806.700C807 985 813 975 825 974M911.700 974C922 976 929 985 929 996.700H961.700C1000 996 1045 990 1052.700 975"/>
        <circle class="hole" cx="979" cy="264" r="17"/><circle class="hole" cx="1190.800" cy="458" r="17"/><circle class="hole" cx="1190.800" cy="677.600" r="17"/><circle class="hole" cx="996.700" cy="890.300" r="17"/>
      </g>
      <path d="M968 649H997" stroke="#d8b0b0" stroke-width="1"/>
    </svg>
  </section>

  <aside class="vbar vbar-right">
    <span class="vtool on"><svg class="ic"><use href="#sel"/></svg></span>
    <span class="vtool"><svg class="ic"><use href="#xcross"/></svg></span>
    <i class="vsep"></i>
    <span class="vtool"><svg class="ic"><use href="#fpadd"/></svg></span>
    <span class="vtool"><svg class="ic"><use href="#route"/></svg></span>
    <span class="vtool"><svg class="ic"><use href="#diff"/></svg></span>
    <span class="vtool"><svg class="ic"><use href="#viaadd"/></svg></span>
    <span class="vtool"><svg class="ic"><use href="#fp2"/></svg></span>
    <span class="vtool"><svg class="ic"><use href="#zone"/></svg></span>
    <i class="vsep"></i>
    <span class="vtool"><svg class="ic"><use href="#line"/></svg></span>
    <span class="vtool"><svg class="ic"><use href="#arc"/></svg></span>
    <span class="vtool"><svg class="ic"><use href="#rect"/></svg></span>
    <span class="vtool"><svg class="ic"><use href="#circ"/></svg></span>
    <span class="vtool"><svg class="ic"><use href="#poly"/></svg></span>
    <span class="vtool"><svg class="ic"><use href="#image"/></svg></span>
    <span class="vtool"><svg class="ic"><use href="#ttool"/></svg></span>
    <span class="vtool"><svg class="ic"><use href="#tbox"/></svg></span>
    <span class="vtool"><svg class="ic"><use href="#dim"/></svg></span>
    <span class="vtool"><svg class="ic"><use href="#del"/></svg></span>
    <i class="vsep"></i>
    <span class="vtool"><svg class="ic"><use href="#gorigin"/></svg></span>
    <span class="vtool"><svg class="ic"><use href="#ruler"/></svg></span>
  </aside>

  <aside class="panel">
    <div class="panel-head">Appearance</div>
    <div class="layers-box">
      <div class="tabs">
        <span class="tab-arrow"><i class="tri-left"></i></span>
        <span class="tab-active">Layers</span>
        <span class="tab-next"><i class="tri-right"></i></span>
      </div>
      <div class="layer-list">
        <div class="lrow sel"><i class="cursor-tri"></i><i class="sw c-fcu"></i><svg class="eye"><use href="#eye"/></svg><span>F.Cu</span></div>
        <div class="lrow"><i class="sw c-bcu"></i><svg class="eye"><use href="#eye"/></svg><span>B.Cu</span></div>
        <div class="lrow"><i class="sw c-fadh"></i><svg class="eye"><use href="#eye"/></svg><span>F.Adhesive</span></div>
        <div class="lrow"><i class="sw c-badh"></i><svg class="eye"><use href="#eye"/></svg><span>B.Adhesive</span></div>
        <div class="lrow"><i class="sw c-fpaste"></i><svg class="eye"><use href="#eye"/></svg><span>F.Paste</span></div>
        <div class="lrow"><i class="sw c-bpaste"></i><svg class="eye"><use href="#eye"/></svg><span>B.Paste</span></div>
        <div class="lrow"><i class="sw c-fsilk"></i><svg class="eye"><use href="#eye"/></svg><span>F.Silkscreen</span></div>
        <div class="lrow"><i class="sw c-bsilk"></i><svg class="eye"><use href="#eye"/></svg><span>B.Silkscreen</span></div>
        <div class="lrow"><i class="sw c-fmask"></i><svg class="eye"><use href="#eye"/></svg><span>F.Mask</span></div>
        <div class="lrow"><i class="sw c-bmask"></i><svg class="eye"><use href="#eye"/></svg><span>B.Mask</span></div>
        <div class="lrow"><i class="sw c-draw"></i><svg class="eye"><use href="#eye"/></svg><span>User.Drawings</span></div>
        <div class="lrow"><i class="sw c-comm"></i><svg class="eye"><use href="#eye"/></svg><span>User.Comments</span></div>
        <div class="lrow"><i class="sw c-eco1"></i><svg class="eye"><use href="#eye"/></svg><span>User.Eco1</span></div>
        <div class="lrow"><i class="sw c-eco2"></i><svg class="eye"><use href="#eye"/></svg><span>User.Eco2</span></div>
        <div class="lrow"><i class="sw c-edge"></i><svg class="eye"><use href="#eye"/></svg><span>Edge.Cuts</span></div>
        <div class="lrow"><i class="sw c-margin"></i><svg class="eye"><use href="#eye"/></svg><span>Margin</span></div>
      </div>
      <div class="display-opts"><i class="tri-right dark"></i><span>Layer Display Optio</span></div>
    </div>
    <div class="preset-label first">Presets (Ctrl+Tab):</div>
    <div class="pcombo"><span class="big">All Layers</span><i class="caret"></i></div>
    <div class="preset-label">Viewports (Shift+Tab):</div>
    <div class="pcombo"><span>---</span><i class="caret"></i></div>
    <div class="panel-head filter-head">Selection Filter</div>
    <div class="filter">
      <label class="chk"><i class="box on"></i>All items</label><label class="chk"><i class="box"></i>Locked items</label>
      <label class="chk"><i class="box on"></i>Footprints</label><label class="chk"><i class="box on"></i>Text</label>
      <label class="chk"><i class="box on"></i>Tracks</label><label class="chk"><i class="box on"></i>Vias</label>
      <label class="chk"><i class="box on"></i>Pads</label><label class="chk"><i class="box on"></i>Graphics</label>
      <label class="chk"><i class="box on"></i>Zones</label><label class="chk"><i class="box on"></i>Rule Areas</label>
      <label class="chk"><i class="box on"></i>Dimensions</label><label class="chk"><i class="box on"></i>Other items</label>
    </div>
  </aside>
</main>

<section class="msgs">
  <div><span>Pads</span><span>0</span></div>
  <div><span>Vias</span><span>0</span></div>
  <div><span>Track Segments</span><span>0</span></div>
  <div><span>Nets</span><span>0</span></div>
  <div><span>Unrouted</span><span>0</span></div>
</section>

<footer class="status">
  <span>Z 3.42</span><span>X 151.7700</span><span>Y 98.0700</span><span>dx 151.7700</span><span>dy 98.0700</span><span>dist 180.6983</span><span>grid 0.0100</span><span>mm</span><span>Select item(s)</span>
</footer>

<div class="viewer">
  <div class="v-title">
    <div class="tb-left"><svg class="v-pin" viewBox="0 0 24 24"><use href="#view3d"/></svg><span class="v-orb"></span></div>
    <div class="v-name">3D Viewer</div>
    <div class="tb-right"><span class="dot d-yellow"></span><span class="dot d-purple"></span><span class="dot d-red"></span></div>
  </div>
  <nav class="v-menu"><span>File</span><span>Edit</span><span>View</span><span>Preferences</span><span>Help</span></nav>
  <div class="v-tools">
    <span class="tool"><svg class="ic"><use href="#dsave"/></svg></span><i class="sep"></i>
    <span class="tool"><svg class="ic"><use href="#copy"/></svg></span><i class="sep"></i>
    <span class="tool"><svg class="ic"><use href="#cube"/></svg></span><i class="sep"></i>
    <span class="tool"><svg class="ic"><use href="#refresh"/></svg></span>
    <span class="tool"><svg class="ic"><use href="#zin"/></svg></span>
    <span class="tool"><svg class="ic"><use href="#zout"/></svg></span>
    <span class="tool"><svg class="ic"><use href="#zfit"/></svg></span><i class="sep"></i>
    <span class="tool"><svg class="ic" viewBox="0 0 24 24"><use href="#rx1"/><text class="it it-ax" x="1" y="10">X</text></svg></span>
    <span class="tool"><svg class="ic" viewBox="0 0 24 24"><use href="#rx2"/><text class="it it-ax" x="1" y="10">X</text></svg></span><i class="sep"></i>
    <span class="tool"><svg class="ic" viewBox="0 0 24 24"><use href="#ry1"/><text class="it it-ax" x="13" y="10">Y</text></svg></span>
    <span class="tool"><svg class="ic" viewBox="0 0 24 24"><use href="#ry2"/><text class="it it-ax" x="13" y="10">Y</text></svg></span><i class="sep"></i>
    <span class="tool"><svg class="ic" viewBox="0 0 24 24"><use href="#rz1"/><text class="it it-ax" x="13" y="23">Z</text></svg></span>
    <span class="tool"><svg class="ic" viewBox="0 0 24 24"><use href="#rz1"/><text class="it it-ax" x="13" y="23">Z</text></svg></span><i class="sep"></i>
    <span class="tool"><svg class="ic"><use href="#flip3"/></svg></span><i class="sep"></i>
    <span class="tool"><svg class="ic"><use href="#aleft"/></svg></span>
    <span class="tool"><svg class="ic"><use href="#aright"/></svg></span>
    <span class="tool"><svg class="ic"><use href="#aup"/></svg></span>
    <span class="tool"><svg class="ic"><use href="#adown"/></svg></span><i class="sep"></i>
    <span class="tool on"><svg class="ic"><use href="#cubeg"/></svg></span>
  </div>
  <div class="v-body">
    <div class="v-view">
      <svg class="v-scene" viewBox="115 264 653 570">
        <g transform="translate(190 300) scale(.33333)">
          <path fill="#6c5048" fill-rule="evenodd" d="M452 105C470 80 560 70 655 69C660 95 680 108 700 110L812 110C835 108 852 95 858 69C950 70 1040 80 1060 105L1060 358C1065 400 1095 435 1130 443L1392 443C1415 450 1435 540 1435 648C1410 648 1395 665 1395 690L1395 810C1395 835 1410 850 1435 850C1435 950 1420 1045 1392 1053L1132 1053C1095 1065 1065 1095 1060 1125L1060 1388C1045 1412 950 1425 858 1427C852 1400 835 1388 812 1386L700 1386C680 1388 660 1400 655 1427C560 1425 465 1412 452 1388L452 1125C445 1095 415 1065 378 1052L115 1052C90 1045 78 950 78 850C100 850 117 835 117 815L117 680C117 665 100 648 78 648C78 540 90 450 117 445L375 445C415 440 445 405 452 360Z
            M543 213a30 30 0 1 0 60 0a30 30 0 1 0 -60 0Z M907 213a30 30 0 1 0 60 0a30 30 0 1 0 -60 0Z M726 414a30 30 0 1 0 60 0a30 30 0 1 0 -60 0Z
            M223 566a30 30 0 1 0 60 0a30 30 0 1 0 -60 0Z M392 748a30 30 0 1 0 60 0a30 30 0 1 0 -60 0Z M223 930a30 30 0 1 0 60 0a30 30 0 1 0 -60 0Z
            M1261 534a30 30 0 1 0 60 0a30 30 0 1 0 -60 0Z M1060 748a30 30 0 1 0 60 0a30 30 0 1 0 -60 0Z M1261 898a30 30 0 1 0 60 0a30 30 0 1 0 -60 0Z
            M726 1082a30 30 0 1 0 60 0a30 30 0 1 0 -60 0Z M575 1251a30 30 0 1 0 60 0a30 30 0 1 0 -60 0Z M940 1251a30 30 0 1 0 60 0a30 30 0 1 0 -60 0Z"/>
          <path fill="#ffff40" fill-rule="evenodd" d="M452 105H680C685 108 695 110 700 110H812C820 110 828 108 832 105H1060V358L755 692 452 360Z
            M543 213a30 30 0 1 0 60 0a30 30 0 1 0 -60 0Z M907 213a30 30 0 1 0 60 0a30 30 0 1 0 -60 0Z M726 414a30 30 0 1 0 60 0a30 30 0 1 0 -60 0Z
            M117 445H375L695 745 378 1052H115V815 680Z M223 566a30 30 0 1 0 60 0a30 30 0 1 0 -60 0Z M392 748a30 30 0 1 0 60 0a30 30 0 1 0 -60 0Z M223 930a30 30 0 1 0 60 0a30 30 0 1 0 -60 0Z
            M1392 443H1130L810 745 1132 1053H1392V850 650Z M1261 534a30 30 0 1 0 60 0a30 30 0 1 0 -60 0Z M1060 748a30 30 0 1 0 60 0a30 30 0 1 0 -60 0Z M1261 898a30 30 0 1 0 60 0a30 30 0 1 0 -60 0Z
            M755 792 1062 1125 1060 1388H832L812 1386H700L680 1388H452V1125Z M726 1082a30 30 0 1 0 60 0a30 30 0 1 0 -60 0Z M575 1251a30 30 0 1 0 60 0a30 30 0 1 0 -60 0Z M940 1251a30 30 0 1 0 60 0a30 30 0 1 0 -60 0Z"/>
          <text class="gtext" x="703" y="759">G***</text>
        </g>
        <path d="M155.500 786V772" stroke="#0c0" stroke-width="3"/><path d="M149 773l6.500-9 6.500 9z" fill="#0c0"/>
        <path d="M160 795h16" stroke="#e22" stroke-width="3"/><path d="M175 789l10 6-10 6z" fill="#e22"/>
        <circle cx="155.500" cy="795" r="8" fill="#0a0aa0"/>
      </svg>
    </div>
    <i class="v-gap"></i>
    <div class="v-panel">
      <div class="panel-head v-head">Appearance</div>
      <div class="v-list">
        <div class="vrow"><i class="sw c-board"></i><svg class="eye"><use href="#eye"/></svg><span>Board Body</span></div>
        <div class="vrow"><i class="sw c-gold"></i><svg class="eye"><use href="#eye"/></svg><span>F.Cu</span></div>
        <div class="vrow"><i class="sw c-gold"></i><svg class="eye"><use href="#eye"/></svg><span>B.Cu</span></div>
        <div class="vrow"><i class="sw c-none"></i><svg class="eye"><use href="#eye"/></svg><span>Adhesive</span></div>
        <div class="vrow"><i class="sw c-paste3"></i><svg class="eye"><use href="#eye"/></svg><span>Solder Paste</span></div>
        <div class="vrow"><i class="sw c-silk3"></i><svg class="eye"><use href="#eye"/></svg><span>F.Silkscreen</span></div>
        <div class="vrow"><i class="sw c-silk3"></i><svg class="eye"><use href="#eye"/></svg><span>B.Silkscreen</span></div>
        <div class="vrow"><i class="sw c-mask3"></i><svg class="eye"><use href="#eyeoff"/></svg><span>F.Mask</span></div>
        <div class="vrow"><i class="sw c-mask3"></i><svg class="eye"><use href="#eye"/></svg><span>B.Mask</span></div>
        <div class="vrow"><i class="sw c-checker"></i><svg class="eye"><use href="#eye"/></svg><span>User.Drawings</span></div>
        <div class="vrow"><i class="sw c-checker"></i><svg class="eye"><use href="#eye"/></svg><span>User.Comments</span></div>
        <div class="vrow"><i class="sw c-checker"></i><svg class="eye"><use href="#eye"/></svg><span>User.Eco1</span></div>
        <div class="vrow"><i class="sw c-checker"></i><svg class="eye"><use href="#eye"/></svg><span>User.Eco2</span></div>
        <div class="vrow vgap"><i class="sw c-none"></i><svg class="eye"><use href="#eye"/></svg><span>Through-hole</span></div>
        <div class="vrow"><i class="sw c-none"></i><svg class="eye"><use href="#eye"/></svg><span>SMD Models</span></div>
        <div class="vrow"><i class="sw c-none"></i><svg class="eye"><use href="#eye"/></svg><span>Virtual Models</span></div>
      </div>
      <div class="v-label">Presets (Ctrl+Tab):</div>
      <div class="v-combo"><span>---</span><i class="caret dark"></i></div>
      <div class="v-label">Viewports (Shift+Tab):</div>
      <div class="v-combo"><span>---</span><i class="caret dark"></i></div>
    </div>
  </div>
  <div class="v-status">
    <span>Reload time 0.037 s</span><span>dx 0.00</span><span>dy 0.00</span><span>zoom 0.83</span>
    <svg class="grip" viewBox="0 0 24 24"><path d="M2 24 24 2M8 24 24 8M14 24 24 14M20 24l4-4" stroke="#aaa" stroke-width="1.200"/></svg>
  </div>
</div>

<svg class="pointer" viewBox="0 0 16 24"><path d="M1 1v19l4.500-4.500 3 7 3-1.300-3-6.700H15z" fill="#000" stroke="#fff" stroke-width="1"/></svg>
</body>
</html>
```
FILE: styles.css
```css
* { box-sizing: border-box; }
html, body { margin: 0; padding: 0; }
body {
  position: relative;
  width: 1920px;
  height: 1080px;
  overflow: hidden;
  display: flex;
  flex-direction: column;
  font-family: "Noto Sans", sans-serif;
  font-size: 16px;
  color: #939393;
  background: #f0efed;
}
i { display: block; font-style: normal; }
svg { display: block; }
.defs { position: absolute; width: 0; height: 0; }

/* icon lettering */
.it { fill: #444; }
.it-a { font: 700 11px "Liberation Sans", sans-serif; text-anchor: middle; }
.it-r { font: 9px "Liberation Sans", sans-serif; }
.it-th { font: italic 9px "Liberation Serif", serif; }
.it-u { font: 11px "DejaVu Sans", sans-serif; text-anchor: middle; }
.it-ax { font: 10px "Liberation Sans", sans-serif; }

/* top panel */
.topbar {
  height: 36px;
  flex: none;
  display: grid;
  grid-template-columns: 1fr auto 1fr;
  align-items: center;
  background: #1e2233;
  border-bottom: 1px solid #262b3d;
}
.archlogo { width: 18px; height: 20px; margin-left: 19px; }
.clock { font-size: 19.500px; color: #eceff4; margin-right: 3px; }
.tray-row { display: flex; align-items: center; justify-content: flex-end; padding-right: 12px; }
.pager { display: flex; width: 81px; height: 23px; margin-right: 6px; }
.pager-on { position: relative; width: 40px; background: #8fb8d2; }
.pager-win { position: absolute; left: 1px; top: 4px; width: 20px; height: 15px; background: #a3c6dc; border: 1px solid #b5d2e4; }
.pager-off { width: 41px; border: 1px solid #262c40; background: #1e2233; }
.tray { width: 30px; height: 30px; display: flex; align-items: center; justify-content: center; }
.tray-ic { width: 22px; height: 22px; }
.tray-text { color: #e0e0e0; font-size: 16px; }
.xp { display: block; width: 21px; height: 23px; background: #000; color: #ddd; font-size: 9.500px; line-height: 10.500px; text-align: center; border-radius: 3px; padding-top: 1px; }
.tray-caret { width: 0; height: 0; border: 5px solid transparent; border-top: 7px solid #eee; border-bottom: 0; }

/* title bar */
.titlebar {
  height: 28px;
  flex: none;
  display: grid;
  grid-template-columns: 1fr auto 1fr;
  align-items: center;
  background: #0c0d12;
}
.tb-left { display: flex; align-items: center; }
.tb-right { display: flex; align-items: center; justify-content: flex-end; }
.kicad { width: 16px; height: 18px; margin-left: 6px; }
.title { color: #6a6c72; font-size: 16.700px; margin: 0 30px 2px 0; }
.dot { display: block; width: 18px; height: 18px; border-radius: 50%; margin-right: 12px; }
.dot-gray { background: #57585d; }
.dot-first { margin-left: 12px; }
.titlebar .tb-right .dot:last-child { margin-right: 5px; }

/* main menu */
.menubar {
  height: 32px;
  flex: none;
  display: flex;
  align-items: center;
  gap: 15.300px;
  padding-left: 9px;
  background: #f6f5f3;
  border-bottom: 1px solid #dcdad7;
  color: #8e8e8e;
  font-size: 17.400px;
}

/* toolbars */
.maintb, .v-tools { display: flex; align-items: center; flex: none; background: #f0efed; }
.maintb { height: 34px; padding-left: 4px; }
.tool { width: 32px; height: 30px; flex: none; display: flex; align-items: center; justify-content: center; }
.tool.on { background: #c5dcf6; box-shadow: inset 0 0 0 1px #3d8be6; width: 29px; margin: 0 1.500px; }
.ic { width: 24px; height: 24px; }
.sep { width: 25px; height: 24px; flex: none; position: relative; }
.sep::before { content: ""; position: absolute; left: 12px; top: 0; width: 1px; height: 24px; background: #c4c2bf; }

.subtb {
  height: 44px;
  flex: none;
  display: flex;
  align-items: center;
  padding: 1px 0 0 5px;
  background: #f0efed;
  color: #939393;
  font-size: 17.400px;
}
.combo {
  height: 39px;
  flex: none;
  display: flex;
  align-items: center;
  justify-content: space-between;
  padding: 0 12px 2px;
  background: #f2f1ef;
  border: 1px solid #d9d7d3;
  border-radius: 6px;
  white-space: nowrap;
}
.combo-track { width: 244px; }
.combo-via { width: 232px; }
.combo-layer { width: 192px; padding: 0 13px 2px 10px; }
.combo-grid { width: 259px; }
.combo-zoom { width: 147px; }
.caret { width: 0; height: 0; border: 5px solid transparent; border-top: 6px solid #8f8f8f; border-bottom: 0; }
.caret.dark { border-top-color: #333; }
.lock-ic { width: 24px; height: 30px; margin-left: 5px; }
.subsep { width: 1px; height: 30px; background: #cfcdca; margin: 0 13px 0 17px; }
.combo-via + .subsep, .combo-grid + .subsep { margin: 0 12px 0 14px; }
.layer-value { display: flex; align-items: center; }
.layer-chip { width: 14px; height: 14px; background: #c83434; border: 1px solid #000; margin-right: 2px; }
.pair-ic { width: 24px; height: 27px; margin-left: 5px; }
.pair-ic + .subsep { margin: 0 13px 0 16px; }

/* workspace */
.workspace { flex: 1 1 auto; min-height: 0; display: flex; }
.vbar { flex: none; display: flex; flex-direction: column; align-items: center; padding-top: 4px; background: #f0efed; }
.vbar-left { width: 35px; }
.vbar-right { width: 39px; padding-right: 5px; }
.vtool { width: 30px; height: 32px; flex: none; display: flex; align-items: center; justify-content: center; }
.vtool.on { background: #c5dcf6; box-shadow: inset 0 0 0 1px #3d8be6; height: 30px; margin: 1px 0; }
.vsep { height: 11px; width: 22px; flex: none; position: relative; }
.vsep::before { content: ""; position: absolute; left: 0; top: 5px; width: 22px; height: 1px; background: #c4c2bf; }
.canvas { flex: none; width: 1666px; background: #001023; }
.board { width: 1666px; height: 824px; }
.copper { fill: #c83434; }
.edge { fill: none; stroke: #d0d2ce; stroke-width: 2.600; }
.edge .hole { stroke-width: 1.500; }

/* appearance panel */
.panel { flex: none; width: 180px; background: #dddbd9; overflow: hidden; }
.panel-head { height: 17px; line-height: 16px; padding-left: 3px; font-size: 11.300px; background: #b9b8b5; color: #2e2e2e; letter-spacing: .2px; }
.layers-box { margin: 6px 0 0 1px; background: #f2f1f0; width: 179px; }
.tabs { height: 38px; display: flex; background: #e8e7e5; border-top: 1px solid #dcdad8; }
.tab-arrow { width: 24px; display: flex; align-items: center; justify-content: center; background: #f8f7f6; }
.tab-active { width: 130px; line-height: 31px; padding-left: 65px; white-space: nowrap; font-size: 17px; color: #8f8f8f; border-bottom: 4px solid #3b84e0; }
.tab-next { flex: 1; display: flex; align-items: center; justify-content: center; }
.tri-left { width: 0; height: 0; border: 5px solid transparent; border-right: 5px solid #c8c8c8; border-left: 0; }
.tri-right { width: 0; height: 0; border: 5px solid transparent; border-left: 5px solid #8f8f8f; border-right: 0; }
.tri-right.dark { border-width: 7px 0 7px 7px; margin-right: 5px; }
.layer-list { height: 391px; overflow: hidden; }
.lrow { position: relative; height: 25px; display: flex; align-items: center; padding-left: 21px; white-space: nowrap; color: #9a9a9a; font-size: 16px; }
.lrow.sel { background: #fff; }
.cursor-tri { position: absolute; left: 8px; top: 6px; width: 0; height: 0; border: 6px solid transparent; border-left: 7px solid #3d3df0; border-right: 0; }
.sw { width: 20px; height: 19px; flex: none; margin-right: 6px; }
.eye { width: 16px; height: 16px; flex: none; margin-right: 4px; }
.vrow .sw { margin-right: 5px; }
.display-opts { height: 31px; display: flex; align-items: center; padding-left: 17px; background: #fbfaf9; color: #939393; white-space: nowrap; }
.preset-label { margin: 5px 0 2px 7px; height: 22px; line-height: 22px; color: #9a9a9a; white-space: nowrap; }
.preset-label.first { margin-top: 8px; }
.pcombo { height: 37px; width: 164px; margin-left: 8px; padding: 0 12px; display: flex; align-items: center; justify-content: space-between; background: #f6f5f3; border-radius: 5px; color: #9a9a9a; }
.pcombo .big { font-size: 16px; }
.pcombo + .preset-label { margin-top: 6px; }
.filter-head { margin-top: 16px; }
.filter { display: grid; grid-template-columns: 128px 1fr; grid-auto-rows: 27px; padding: 6px 0 0 9px; }
.chk { display: flex; align-items: center; white-space: nowrap; color: #9a9a9a; }
.box { width: 16px; height: 16px; flex: none; margin-right: 4px; border-radius: 3px; background: #fff; border: 1px solid #bbb; position: relative; }
.box.on { background: #3b84e0; border-color: #3b84e0; }
.box.on::after { content: ""; position: absolute; left: 3.500px; top: 1.500px; width: 7px; height: 5px; border: solid #fff; border-width: 0 0 2.500px 2.500px; transform: rotate(-45deg); }

/* swatches */
.c-fcu { background: #c83434; }
.c-bcu { background: #4d7fc4; }
.c-fadh { background: #840084; }
.c-badh { background: #000084; }
.c-fpaste { background: conic-gradient(#a39289 25%, #9a8a80 0 50%, #a39289 0 75%, #9a8a80 0) 0 0 / 20px 19px; }
.c-bpaste { background: conic-gradient(#00b0b0 25%, #00a8a8 0 50%, #00b0b0 0 75%, #00a8a8 0) 0 0 / 20px 19px; }
.c-fsilk { background: #f2eda1; }
.c-bsilk { background: #e6b2a6; }
.c-fmask { background: conic-gradient(#69376f 25%, #52275e 0 50%, #69376f 0 75%, #52275e 0) 0 0 / 20px 19px; }
.c-bmask { background: conic-gradient(#18756c 25%, #02645c 0 50%, #18756c 0 75%, #02645c 0) 0 0 / 20px 19px; }
.c-draw { background: #bcbcbc; }
.c-comm { background: #5a93e0; }
.c-eco1 { background: #b2dacf; }
.c-eco2 { background: #d6c54e; }
.c-edge { background: #d0d2cd; }
.c-margin { background: #ff26e2; }
.c-board { background: conic-gradient(#4b3e2c 25%, #43372a 0 50%, #4b3e2c 0 75%, #43372a 0) 0 0 / 20px 19px; }
.c-gold { background: #b59a00; }
.c-none { background: transparent; }
.c-paste3 { background: #808080; }
.c-silk3 { background: #e6e6e6; }
.c-mask3 { background: conic-gradient(#3d5a49 25%, #34503f 0 50%, #3d5a49 0 75%, #34503f 0) 0 0 / 20px 19px; }
.c-checker { background: conic-gradient(#fff 25%, #d9d9d9 0 50%, #fff 0 75%, #d9d9d9 0) 0 0 / 20px 19px; }

/* message panel and status */
.msgs {
  height: 52px;
  flex: none;
  display: grid;
  grid-template-columns: 85px 77.500px 177.500px 83px 1fr;
  padding-left: 16px;
  background: #f0efed;
  border-top: 1px solid #d5d3d0;
  color: #8e8e8e;
  font-size: 17.400px;
}
.msgs div { display: flex; flex-direction: column; }
.msgs span { height: 25px; line-height: 25px; }
.status {
  height: 30px;
  flex: none;
  display: grid;
  grid-template-columns: 106.500px 101px 142.500px 109.500px 100px 180.500px 281px 85.500px 1fr;
  align-items: center;
  padding-left: 367px;
  background: #f6f5f3;
  color: #8a8a8a;
  font-size: 17.400px;
  white-space: nowrap;
}

/* 3D viewer window */
.viewer {
  position: absolute;
  left: 111px;
  top: 166px;
  width: 857px;
  height: 701px;
  padding: 0 3px 2px 4px;
  background: #0c0d12;
  border-radius: 6px 6px 4px 4px;
  display: flex;
  flex-direction: column;
  color: #2e3436;
}
.v-title { height: 31px; flex: none; display: grid; grid-template-columns: 1fr auto 1fr; align-items: center; }
.v-pin { width: 12px; height: 16px; margin-left: 4px; }
.v-orb { width: 18px; height: 18px; border-radius: 50%; margin-left: 15px; background: linear-gradient(90deg, #3cc6c0, #4a80e8); }
.v-name { color: #cfd0d2; font-size: 16.500px; margin-right: 30px; }
.d-yellow { background: linear-gradient(90deg, #ffe000, #f5b800); }
.d-purple { background: linear-gradient(90deg, #b400f0, #8a00d0); }
.d-red { background: linear-gradient(90deg, #ff3a3a, #ff5a5a); margin-right: 2px; }
.v-menu { height: 32px; flex: none; display: flex; align-items: center; gap: 15.500px; padding-left: 8px; background: #f6f5f3; border-bottom: 1px solid #dcdad7; font-size: 17.400px; }
.v-tools { height: 35px; padding-left: 3.700px; }
.v-body { height: 570px; flex: none; display: flex; background: #e9e7e5; }
.v-view { width: 653px; flex: none; background: linear-gradient(#cdcde9, #676781); border: 1px solid #8c8c8c; border-top-color: #a5a5b5; }
.v-scene { width: 651px; height: 568px; }
.gtext { font-family: "DejaVu Sans Mono", monospace; font-size: 38px; fill: #fff; }
.v-gap { width: 6px; flex: none; }
.v-panel { width: 191px; flex: none; background: #dddbd9; }
.v-head { padding-left: 2px; font-size: 11.300px; }
.v-list { height: 408px; overflow: hidden; padding-top: 4.500px; }
.vrow { height: 25px; display: flex; align-items: center; padding-left: 5px; white-space: nowrap; color: #3a3f42; }
.vrow.vgap { margin-top: 12.500px; }
.v-label { height: 22px; line-height: 22px; margin: 7px 0 4px 7px; color: #3a3f42; white-space: nowrap; }
.v-combo + .v-label { margin-top: 6px; margin-bottom: 3px; }
.v-combo { width: 175px; height: 37px; margin-left: 8px; padding: 0 9px 0 12px; display: flex; align-items: center; justify-content: space-between; background: #f4f3f1; border: 1px solid #cfcdc9; border-bottom-color: #b9b7b3; border-radius: 5px; color: #2e3436; }
.v-status { height: 31px; flex: none; position: relative; display: grid; grid-template-columns: 431px 130px 129.500px 1fr; align-items: center; padding: 2px 0 0 4px; background: #f6f5f3; font-size: 17.400px; }
.grip { position: absolute; right: 2px; bottom: 2px; width: 24px; height: 24px; }
.pointer { position: absolute; left: 737px; top: 526px; width: 16px; height: 24px; }
```
